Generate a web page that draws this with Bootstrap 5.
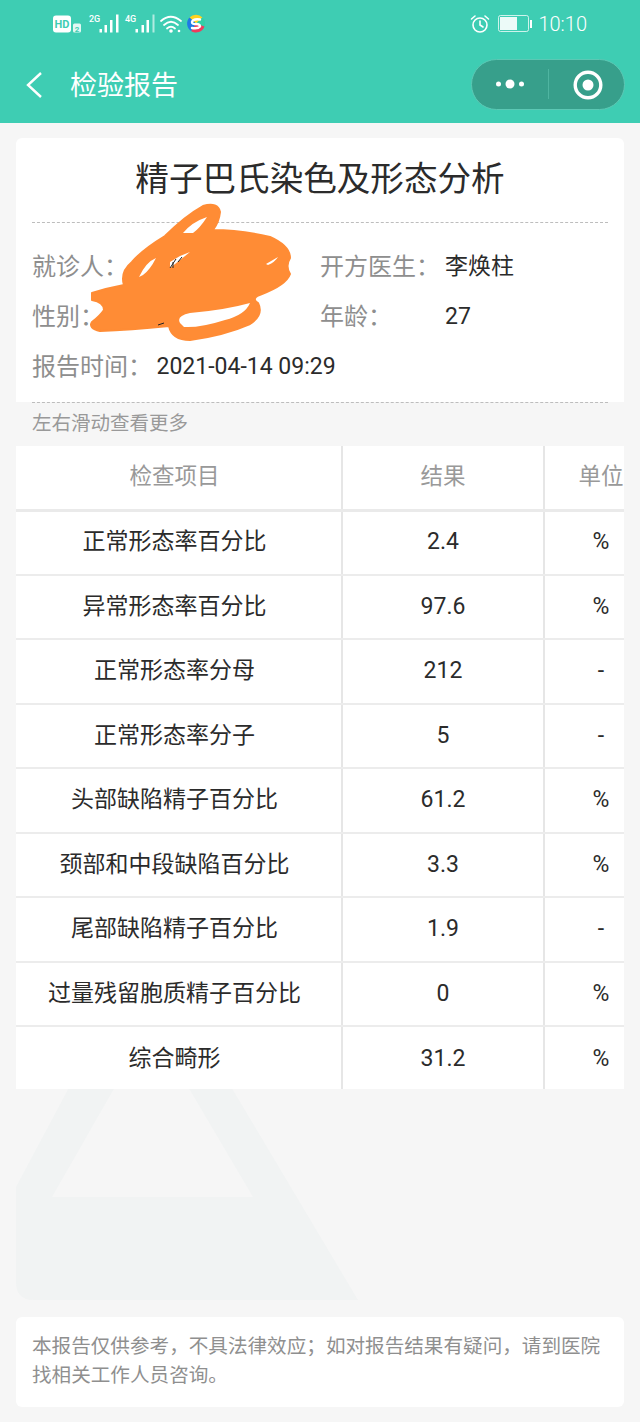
<!DOCTYPE html>
<html lang="zh">
<head>
  <meta charset="UTF-8">
  <meta name="viewport" content="width=device-width, initial-scale=1.0">
  <title>检验报告</title>
  <link href="https://cdn.jsdelivr.net/npm/bootstrap@5.3.0/dist/css/bootstrap.min.css" rel="stylesheet">
  <style>
    html, body { height: 100%; }
    body {
      background: #f6f6f6;
      font-family: Roboto, "Noto Sans CJK SC", sans-serif;
      color: #2b2b2b;
      overflow: hidden;
    }
    .page-wrap { width: 640px; height: 1422px; overflow: hidden; }
    .top-head { background: #3ecdb3; height: 123px; color: #fff; }
    .status-row { height: 47px; padding: 0 53px; }
    .status-time { font-size: 20px; font-weight: 300; line-height: 1; margin-left: 5px; }
    .nav-row { height: 76px; padding: 0 15px 0 26px; }
    .nav-title { font-size: 27px; margin-left: 26px; line-height: 1; padding-top: 2px; }
    .capsule {
      width: 154px; height: 51px; border-radius: 26px; margin-top: -2px;
      background: #379f8b; border: 1px solid #5cc8b4;
    }
    .capsule-side { width: 76px; }
    .capsule-line { width: 1px; height: 30px; background: #4fb5a1; }
    .capsule-ring { margin-left: 3px; margin-top: 2px; }
    .report-card { margin: 15px 16px 0; height: 264px; padding: 0 16px; border-radius: 6px 6px 0 0; }
    .report-title { height: 84px; margin: 0; font-size: 33.6px; font-weight: 400; line-height: 84px; text-align: center; color: #2b2b2b; }
    .dash-line { border-top: 1px dashed #bdbdbd; }
    .info-grid { padding-top: 19px; height: 179px; }
    .info-row { height: 50px; font-size: 23px; }
    .info-label { color: #8e8e8e; font-size: 24px; }
    .label-left { width: 124.5px; }
    .label-right { width: 125px; }
    .half-left { width: 288px; }
    .tip-text { margin: 10px 16px 10px 32px; font-size: 19.5px; line-height: 24px; color: #999; }
    .table-wrap { margin: 0 16px; overflow: hidden; height: 643px; }
    .report-table { table-layout: fixed; width: 643px; margin: 0; background: #fff; border-collapse: collapse; }
    .report-table th, .report-table td { padding: 0; text-align: center; vertical-align: middle; background: #fff; box-shadow: none; }
    .report-table th {
      height: 64px; font-size: 22.5px; font-weight: 400; color: #999;
      border-bottom: 3px solid #eaeaea; border-right: 2px solid #e6e6e6;
    }
    .report-table td {
      height: 64.5px; font-size: 23px; color: #2b2b2b;
      border-bottom: 2px solid #ececec; border-right: 2px solid #e6e6e6;
    }
    .report-table tr:last-child td { border-bottom: 0; }
    .report-table .name-cell { padding-right: 8px; }
    .col-name { width: 326px; }
    .col-val { width: 202px; }
    .note-card {
      margin: 228px 16px 0; height: 90px; padding: 15px 16px; border-radius: 6px;
      font-size: 19.6px; line-height: 29px; color: #8f8f8f;
    }
    .page-wrap > * { position: relative; z-index: 1; }
    .page-wrap > .water-mark { position: absolute; left: 0; top: 1080px; z-index: 0; }
    .page-wrap > .scribble { position: absolute; left: 0; top: 190px; z-index: 5; }
  </style>
</head>
<body>
  <div class="page-wrap position-relative">
    <svg class="water-mark" width="400" height="240" viewBox="0 1080 400 240">
      <path fill-rule="evenodd" fill="#f1f3f3" d="M73 1080H227L358 1300H34Q16 1300 16 1282V1187ZM119 1080L52 1197H253L184 1080Z"/>
    </svg>

    <div class="top-head">
      <div class="status-row d-flex align-items-center">
        <svg width="156" height="26" viewBox="0 0 156 26" fill="#fff">
          <rect x="0" y="4.500" width="18" height="17" rx="3"/>
          <text x="9" y="17" font-size="11" font-weight="700" text-anchor="middle" fill="#3ecdb3" font-family="Roboto">HD</text>
          <rect x="20" y="12.500" width="8" height="9" rx="1.500" opacity=".85"/>
          <text x="24" y="20.500" font-size="8" font-weight="700" text-anchor="middle" fill="#3ecdb3" font-family="Roboto">2</text>
          <text x="36" y="11" font-size="9" font-weight="500" font-family="Roboto">2G</text>
          <rect x="46.500" y="18" width="2.500" height="3.500"/><rect x="51.500" y="14" width="2.500" height="7.500"/><rect x="57" y="9" width="2.500" height="12.500"/><rect x="63" y="3.500" width="2.500" height="18"/>
          <text x="72" y="11" font-size="9" font-weight="500" font-family="Roboto">4G</text>
          <rect x="82.500" y="18" width="2.500" height="3.500"/><rect x="88.500" y="14" width="2.500" height="7.500"/><rect x="93.500" y="9" width="2.500" height="12.500"/><rect x="99.500" y="3.500" width="2" height="18" opacity=".6"/>
          <g fill="none" stroke="#fff" stroke-width="1.800" stroke-linecap="round">
            <path d="M108 10Q117.500 1.500 128 10"/><path d="M111 14Q118 7.500 125 14"/><path d="M114 17.500Q118 14 122 17.500"/>
          </g>
          <circle cx="118" cy="20" r="1.800"/><circle cx="126" cy="20" r="1.300"/>
          <path d="M136.500 6.500A9 9 0 0 1 149.500 6.500L143 12.500Z" fill="#ffd21f"/>
          <path d="M149.500 6.500A9 9 0 0 1 151.500 15.500L143 12.500Z" fill="#2fd0a8"/>
          <path d="M151.500 15.500A9 9 0 0 1 138 20L143 12.500Z" fill="#ef3b5d"/>
          <path d="M138 20A9 9 0 0 1 136.500 6.500L143 12.500Z" fill="#1f78e6"/>
          <path d="M147 8.500Q140 7.500 139 11Q139 13.500 143 13Q147 13 147 15.500Q145 18 139 17" fill="none" stroke="#fff" stroke-width="2.400" stroke-linecap="round"/>
        </svg>
        <div class="ms-auto d-flex align-items-center">
          <svg width="20" height="20" viewBox="0 0 20 20" fill="none" stroke="#fff" stroke-width="1.600">
            <circle cx="10" cy="11" r="7"/><path d="M10 7V11L13 13" stroke-linecap="round"/><path d="M1.500 5L5 2M18.500 5L15 2" stroke-linecap="round"/>
          </svg>
          <svg class="ms-2" width="35" height="18" viewBox="0 0 35 18">
            <rect x=".5" y=".5" width="30" height="16" rx="2" fill="none" stroke="#fff" stroke-opacity=".75"/>
            <rect x="2" y="2" width="17" height="13" fill="#fff" fill-opacity=".9"/>
            <rect x="32" y="5" width="2" height="8" fill="#fff"/>
          </svg>
          <span class="status-time">10:10</span>
        </div>
      </div>
      <div class="nav-row d-flex align-items-center">
        <svg width="18" height="28" viewBox="0 0 18 28" fill="none" stroke="#fff" stroke-width="2.400">
          <path d="M15 2L2 14L15 26"/>
        </svg>
        <span class="nav-title">检验报告</span>
        <div class="capsule ms-auto d-flex align-items-center">
          <div class="capsule-side d-flex justify-content-center align-items-center">
            <svg width="32" height="12" viewBox="0 0 32 12" fill="#fff"><circle cx="4.500" cy="6" r="2.500"/><circle cx="16" cy="6" r="4.500"/><circle cx="27.500" cy="6" r="2.500"/></svg>
          </div>
          <div class="capsule-line"></div>
          <div class="flex-grow-1 d-flex justify-content-center">
            <svg class="capsule-ring" width="30" height="30" viewBox="0 0 30 30"><circle cx="15" cy="15" r="12.800" fill="none" stroke="#fff" stroke-width="3.400"/><circle cx="15" cy="15" r="5.500" fill="#fff"/></svg>
          </div>
        </div>
      </div>
    </div>

    <div class="report-card bg-white">
      <h1 class="report-title">精子巴氏染色及形态分析</h1>
      <div class="dash-line"></div>
      <div class="info-grid">
        <div class="info-row d-flex align-items-center">
          <div class="half-left d-flex"><span class="info-label">就诊人：</span></div>
          <span class="info-label label-right">开方医生：</span><span>李焕柱</span>
        </div>
        <div class="info-row d-flex align-items-center">
          <div class="half-left d-flex"><span class="info-label">性别：</span></div>
          <span class="info-label label-right">年龄：</span><span>27</span>
        </div>
        <div class="info-row d-flex align-items-center">
          <span class="info-label label-left">报告时间：</span><span>2021-04-14 09:29</span>
        </div>
      </div>
      <div class="dash-line"></div>
    </div>

    <div class="tip-text">左右滑动查看更多</div>

    <div class="table-wrap">
      <table class="table report-table">
        <colgroup><col class="col-name"><col class="col-val"><col></colgroup>
        <thead>
          <tr><th class="name-cell">检查项目</th><th>结果</th><th>单位</th></tr>
        </thead>
        <tbody id="rows"></tbody>
      </table>
    </div>

    <div class="note-card bg-white">本报告仅供参考，不具法律效应；如对报告结果有疑问，请到医院找相关工作人员咨询。</div>

    <svg class="scribble" width="300" height="160" viewBox="0 190 300 160">
      <path fill="#ff8c35" stroke="#ff8c35" stroke-width="2" stroke-linejoin="round" d="M92 293Q108 288 124 285Q120 272 132 262Q142 250 165 236Q185 216 203 206Q218 202 220 212Q219 222 213 230Q240 230 270 237Q290 246 290 258Q285 266 290 274Q286 285 262 294Q250 298 258 303Q264 315 250 324Q225 335 190 340Q172 340 169 326Q130 330 100 331Q88 328 92 322Q100 316 104 310Q104 302 92 300Z"/>
      <path fill="#fff" d="M183 233Q192 222 207 217Q200 228 193 233ZM139 277Q146 262 156 258Q150 270 143 275ZM180 323Q176 316 190 313Q225 310 250 303Q245 315 225 320Q200 328 184 327ZM266 264L278 257Q275 262 268 265ZM170 268L190 252L180 256L170 262Z"/>
      <path fill="none" stroke="#222" stroke-width="1" d="M170 268L176 259M173 268L173 262M178 262L182 257M158 325L164 323"/>
    </svg>
  </div>

  <script src="https://cdn.jsdelivr.net/npm/bootstrap@5.3.0/dist/js/bootstrap.bundle.min.js"></script>
  <script>
    const rows = [
      ['正常形态率百分比', '2.4', '%'],
      ['异常形态率百分比', '97.6', '%'],
      ['正常形态率分母', '212', '-'],
      ['正常形态率分子', '5', '-'],
      ['头部缺陷精子百分比', '61.2', '%'],
      ['颈部和中段缺陷百分比', '3.3', '%'],
      ['尾部缺陷精子百分比', '1.9', '-'],
      ['过量残留胞质精子百分比', '0', '%'],
      ['综合畸形', '31.2', '%']
    ];
    const body = document.getElementById('rows');
    rows.forEach(r => {
      const tr = document.createElement('tr');
      tr.innerHTML = `<td class="name-cell">${r[0]}</td><td>${r[1]}</td><td>${r[2]}</td>`;
      body.appendChild(tr);
    });
  </script>
</body>
</html>
